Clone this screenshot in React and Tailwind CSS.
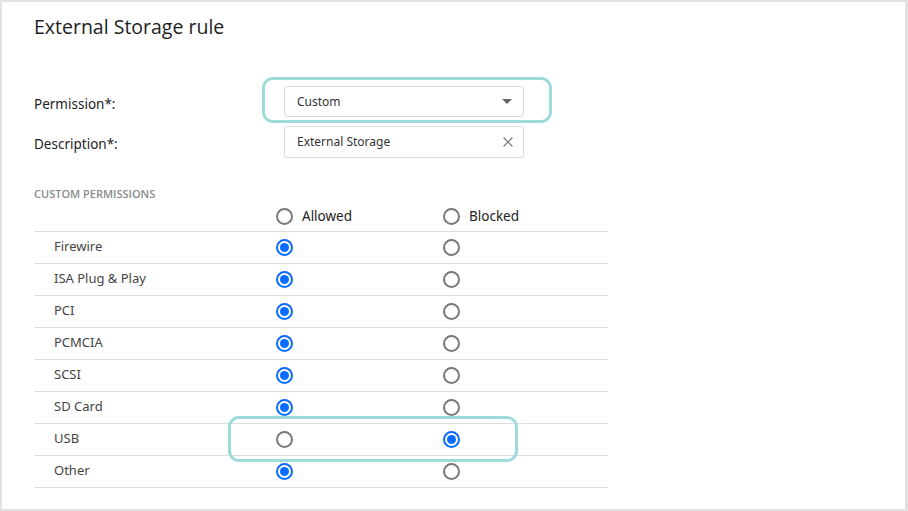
import { X } from 'lucide-react'

const rows = [
  { name: 'Firewire', allowed: true },
  { name: 'ISA Plug & Play', allowed: true },
  { name: 'PCI', allowed: true },
  { name: 'PCMCIA', allowed: true },
  { name: 'SCSI', allowed: true },
  { name: 'SD Card', allowed: true },
  { name: 'USB', allowed: false, highlight: true },
  { name: 'Other', allowed: true },
]

function Radio({ checked }) {
  return checked ? (
    <span className="w-[17px] h-[17px] rounded-full border-2 border-[#0a6cff] flex items-center justify-center bg-white">
      <span className="w-[9px] h-[9px] rounded-full bg-[#0a6cff]" />
    </span>
  ) : (
    <span className="w-[17px] h-[17px] rounded-full border-2 border-[#7a7a7a] bg-white" />
  )
}

export default function App() {
  return (
    <div className="w-[908px] h-[511px] bg-white border-2 border-[#e2e2e2] border-r-[3px] overflow-hidden font-['Noto_Sans',sans-serif] text-[#222]">
      <h1 className="pl-[32px] pt-[11px] text-[19.5px] leading-[28px] font-['Open_Sans',sans-serif] font-medium text-[#1e1e1e]">
        External Storage rule
      </h1>

      <div className="mt-[36px] flex items-start h-[46px]">
        <span className="pl-[32px] pt-[17px] w-[260px] text-[13.5px] leading-[20px] text-[#222]">Permission*:</span>
        <div className="w-[290px] h-[46px] rounded-[11px] border-[3px] border-[#9ddcd8] pt-[6px] pl-[19px]">
          <div className="w-[240px] h-[31px] border border-[#dcdcdc] rounded-[3px] flex items-center justify-between pl-[12px] pr-[11px]">
            <span className="text-[12px] text-[#333]">Custom</span>
            <span className="w-0 h-0 border-l-[5px] border-r-[5px] border-t-[5px] border-l-transparent border-r-transparent border-t-[#666]" />
          </div>
        </div>
      </div>

      <div className="mt-[3px] flex items-center h-[32px]">
        <span className="pl-[32px] pt-[5px] w-[282px] text-[13.5px] text-[#222]">Description*:</span>
        <div className="w-[240px] h-[32px] border border-[#dcdcdc] rounded-[3px] flex items-center justify-between pl-[12px] pr-[7px]">
          <span className="text-[12px] text-[#333]">External Storage</span>
          <X className="w-[16px] h-[16px] text-[#777]" strokeWidth={1.8} />
        </div>
      </div>

      <div className="mt-[28px] pl-[32px] text-[11px] font-['Open_Sans',sans-serif] font-semibold text-[#8a8a8a]">
        CUSTOM PERMISSIONS
      </div>

      <div className="ml-[32px] w-[574px]">
        <div className="flex items-center h-[29px] border-b border-[#dedede]">
          <div className="w-[242px]" />
          <div className="w-[167px] flex items-center gap-[9px]">
            <Radio checked={false} />
            <span className="text-[13.5px] text-[#222]">Allowed</span>
          </div>
          <div className="flex items-center gap-[9px]">
            <Radio checked={false} />
            <span className="text-[13.5px] text-[#222]">Blocked</span>
          </div>
        </div>
        {rows.map(r => (
          <div key={r.name} className="relative flex items-center h-[32px] border-b border-[#dedede]">
            {r.highlight && (
              <div className="absolute left-[194px] top-[-8px] w-[290px] h-[46px] rounded-[11px] border-[3px] border-[#9ddcd8]" />
            )}
            <span className="w-[242px] pl-[20px] text-[13px] text-[#444]">{r.name}</span>
            <div className="w-[167px] flex">
              <Radio checked={r.allowed} />
            </div>
            <div className="flex">
              <Radio checked={!r.allowed} />
            </div>
          </div>
        ))}
      </div>
    </div>
  )
}
